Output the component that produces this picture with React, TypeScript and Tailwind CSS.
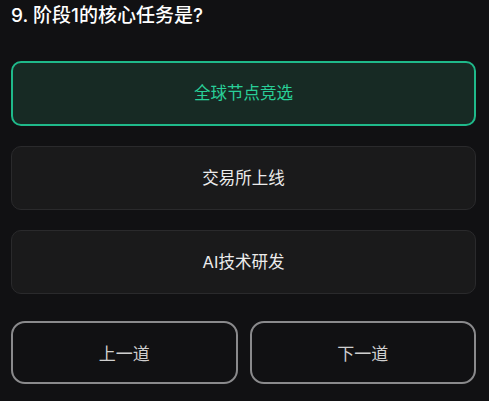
import React, { useState } from "react";

const options = ["全球节点竞选", "交易所上线", "AI技术研发"];

const App = () => {
  const [selected, setSelected] = useState(0);

  return (
    <div
      className="min-h-[401px] w-[489px] bg-[#111113] pl-[11px] pr-[13px] pt-[3px]"
      style={{ fontFamily: 'Inter, "Noto Sans CJK SC", sans-serif' }}
    >
      <h2 className="text-[19px] leading-[26px] font-medium text-white">9. 阶段1的核心任务是?</h2>

      <div className="mt-[32px] flex flex-col gap-[20px]">
        {options.map((opt, index) => (
          <button
            key={opt}
            onClick={() => setSelected(index)}
            className={
              index === selected
                ? "h-[65px] w-full rounded-[10px] border-2 border-[#1fb98a] bg-[#172a24] text-[16.5px] text-[#29cf98]"
                : "h-[64px] w-full rounded-[10px] border border-[#2a2a2c] bg-[#1a1a1b] text-[16.5px] text-[#ececec]"
            }
          >
            {opt}
          </button>
        ))}
      </div>

      <div className="mt-[27px] flex gap-[12px]">
        <button className="h-[63px] flex-1 rounded-[14px] border-2 border-[#8a8a8c] pt-[4px] text-[17px] text-[#cfcfcf]">
          上一道
        </button>
        <button className="h-[63px] flex-1 rounded-[14px] border-2 border-[#8a8a8c] pt-[4px] text-[17px] text-[#cfcfcf]">
          下一道
        </button>
      </div>
    </div>
  );
};

export default App;
